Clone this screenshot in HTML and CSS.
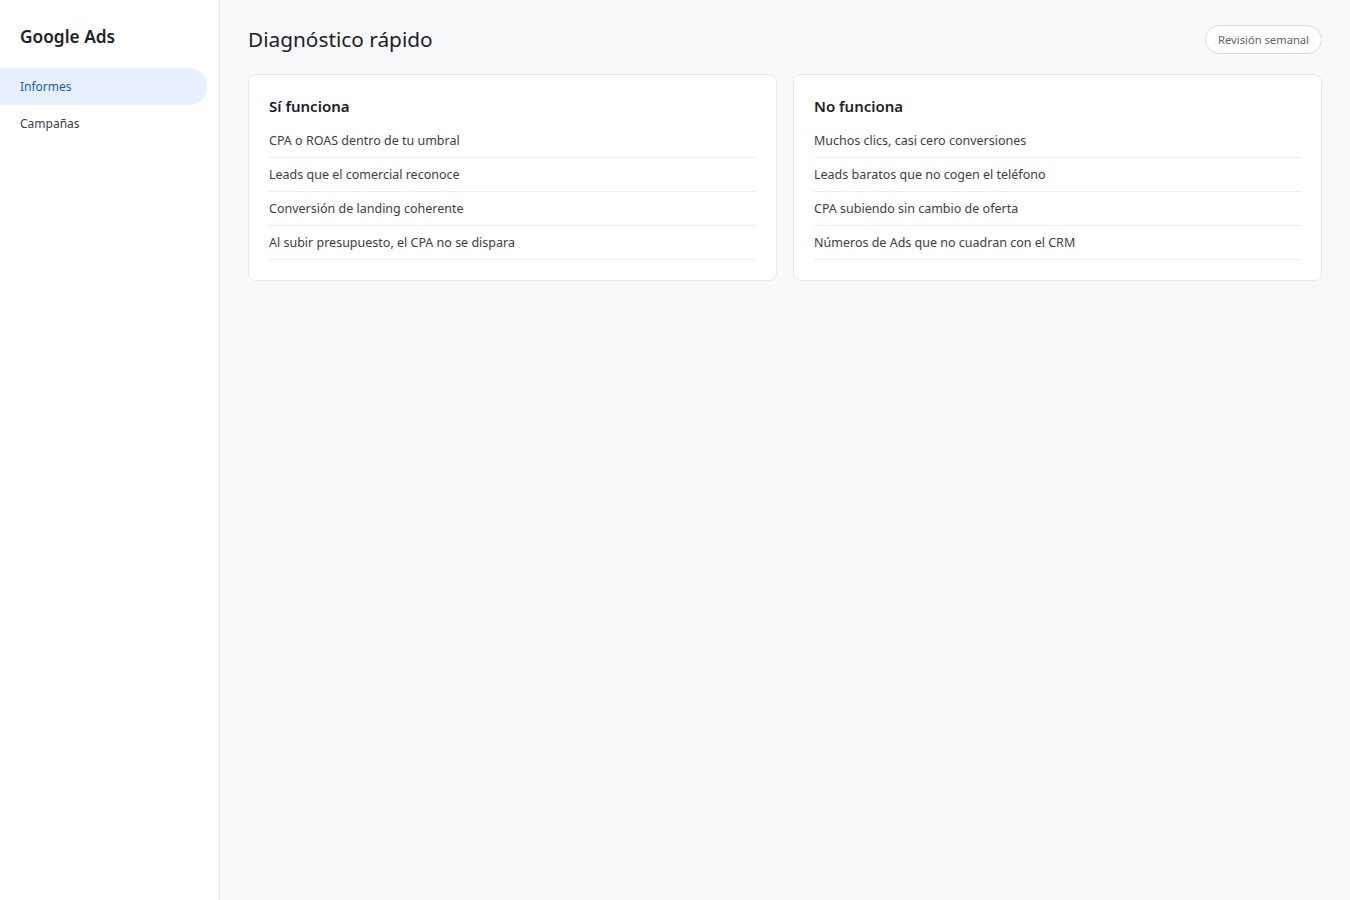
FILE: index.html
```html
<!DOCTYPE html>
<html lang="es">
<head>
<meta charset="utf-8">
<title>Google Ads</title>
<link rel="stylesheet" href="styles.css">
</head>
<body>
<div class="app">
  <aside class="sidebar">
    <div class="brand">Google Ads</div>
    <nav class="nav">
      <a class="nav-item active">Informes</a>
      <a class="nav-item">Campañas</a>
    </nav>
  </aside>
  <main class="main">
    <header class="header">
      <h1 class="title">Diagnóstico rápido</h1>
      <button class="pill">Revisión semanal</button>
    </header>
    <section class="grid">
      <div class="card">
        <h2 class="card-title">Sí funciona</h2>
        <ul class="list">
          <li>CPA o ROAS dentro de tu umbral</li>
          <li>Leads que el comercial reconoce</li>
          <li>Conversión de landing coherente</li>
          <li>Al subir presupuesto, el CPA no se dispara</li>
        </ul>
      </div>
      <div class="card">
        <h2 class="card-title">No funciona</h2>
        <ul class="list">
          <li>Muchos clics, casi cero conversiones</li>
          <li>Leads baratos que no cogen el teléfono</li>
          <li>CPA subiendo sin cambio de oferta</li>
          <li>Números de Ads que no cuadran con el CRM</li>
        </ul>
      </div>
    </section>
  </main>
</div>
</body>
</html>
```

FILE: styles.css
```css
* { box-sizing: border-box; }
html, body { margin: 0; height: 100%; }
body {
  font-family: "Noto Sans", "Open Sans", sans-serif;
  color: #202124;
  background: #f8f9fa;
}
.app { display: flex; min-height: 100vh; }
.sidebar {
  width: 220px;
  flex-shrink: 0;
  background: #ffffff;
  border-right: 1px solid #e6e8eb;
  padding: 24px 12px 0 0;
}
.brand {
  font-size: 17.3px;
  font-weight: 600;
  padding-left: 20px;
  line-height: 26px;
  margin-bottom: 18px;
}
.nav { display: flex; flex-direction: column; gap: 0; }
.nav-item {
  display: block;
  height: 37px;
  line-height: 36px;
  padding: 1px 0 0 20px;
  font-size: 12px;
  color: #3c4043;
  border-radius: 0 18px 18px 0;
}
.nav-item.active { background: #e8f0fe; color: #1a5fb4; }
.main { flex: 1; padding: 24px 28px 24px 28px; }
.header {
  display: flex;
  align-items: center;
  justify-content: space-between;
  height: 30px;
  margin-bottom: 20px;
}
.title { margin: 0; font-size: 20.8px; font-weight: 400; color: #202124; }
.pill {
  font-family: inherit;
  font-size: 11.2px;
  color: #5f6368;
  background: #ffffff;
  border: 1px solid #dadce0;
  border-radius: 15px;
  height: 29px;
  padding: 0 12px;
}
.grid { display: grid; grid-template-columns: 1fr 1fr; gap: 16px; }
.card {
  background: #ffffff;
  border: 1px solid #e6e8eb;
  border-radius: 8px;
  padding: 20px 20px 20px 20px;
}
.card-title { margin: 0 0 7px 0; font-size: 15px; font-weight: 600; line-height: 22px; }
.list { list-style: none; margin: 0; padding: 0; }
.list li {
  font-size: 12.5px;
  line-height: 32px;
  padding-top: 1px;
  color: #3c4043;
  border-bottom: 1px solid #eceef0;
}
```
